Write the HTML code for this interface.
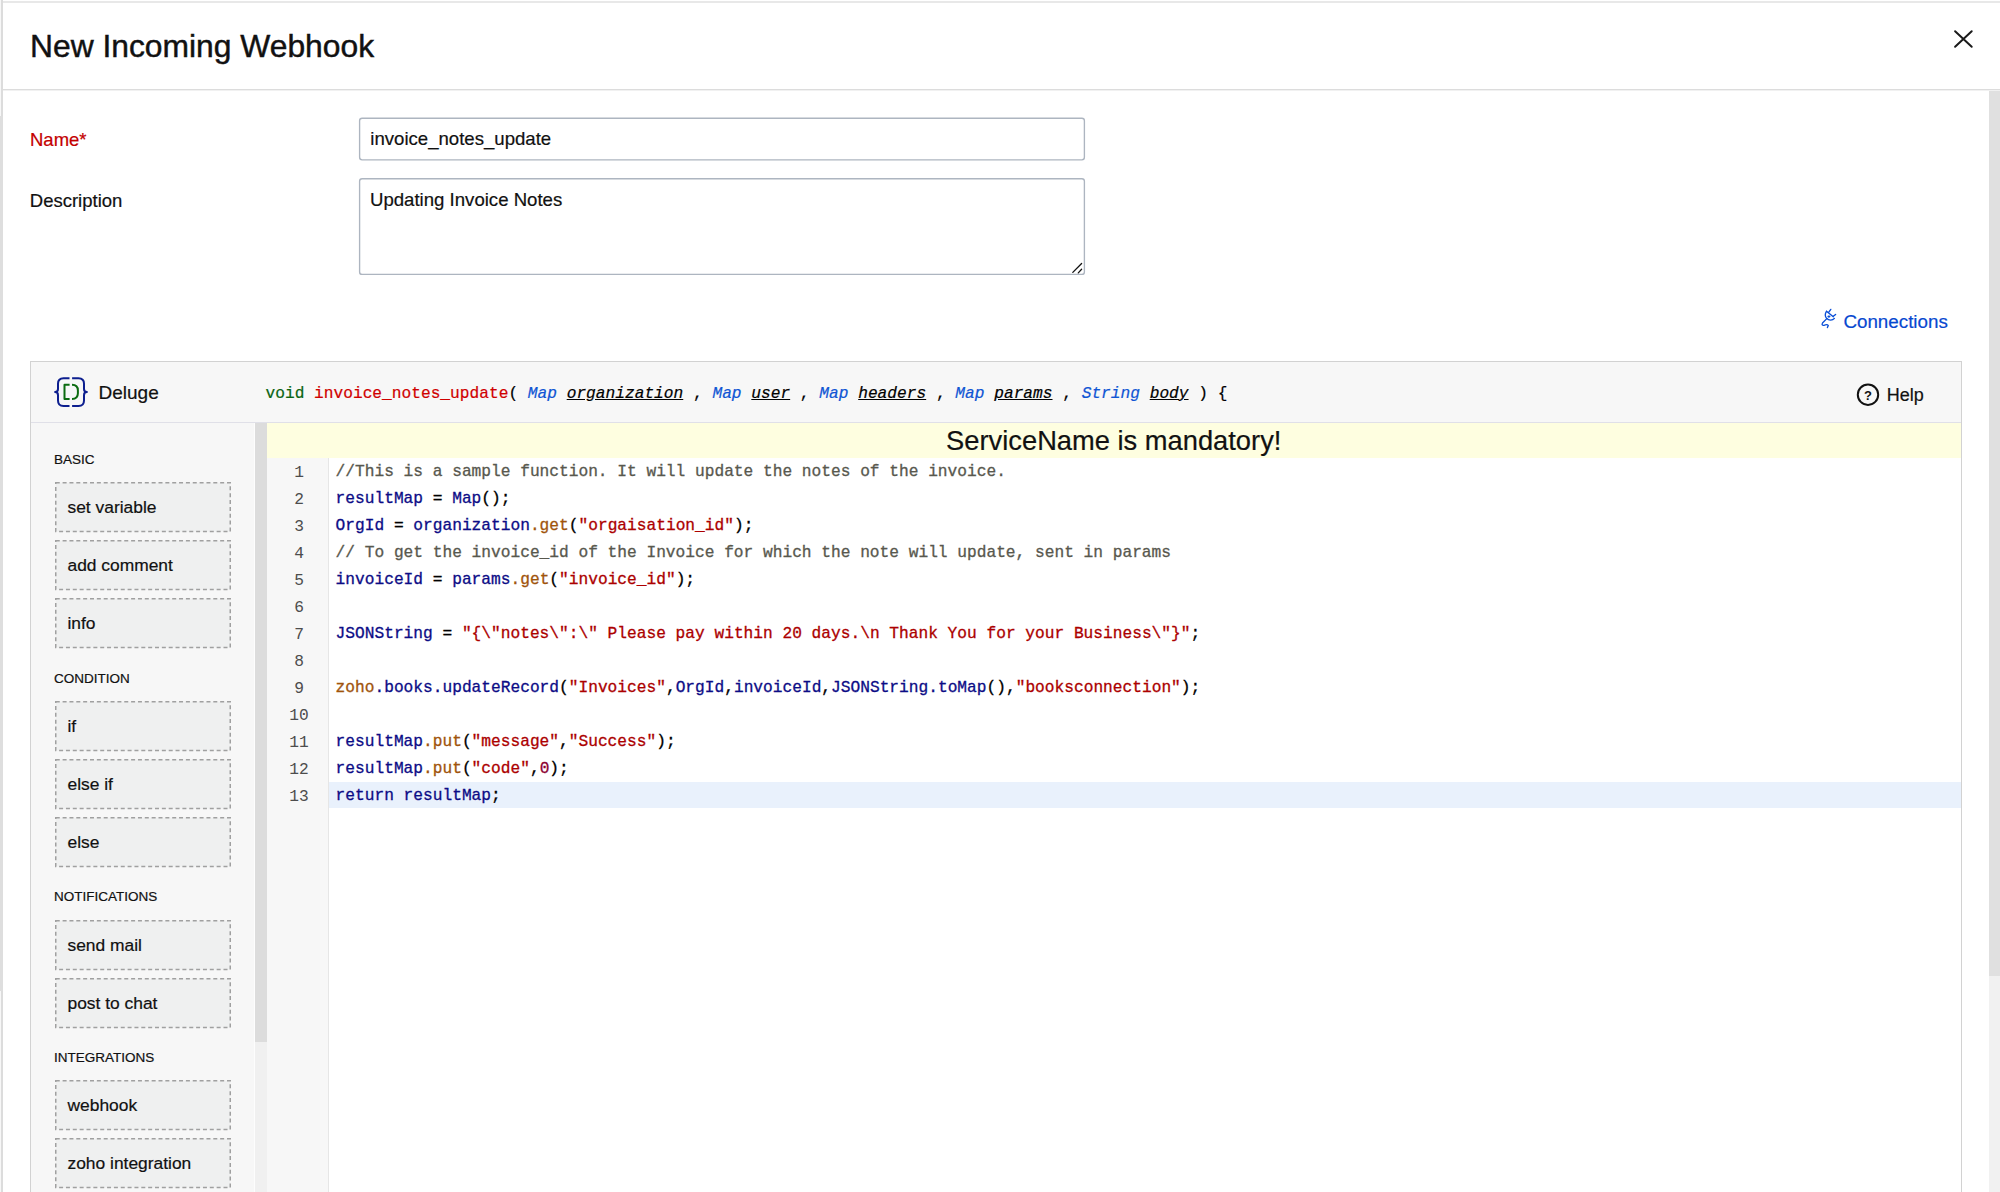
<!DOCTYPE html>
<html><head><meta charset="utf-8">
<style>
html,body{margin:0;padding:0;}
body{width:2000px;height:1192px;position:relative;overflow:hidden;background:#fff;font-family:"Liberation Sans",sans-serif;color:#111;}
.a{position:absolute;}
.t{position:absolute;white-space:pre;line-height:1;}
.m{font-family:"Liberation Mono",monospace;}
.code div,.sig{-webkit-text-stroke:0.3px currentColor;}
.box span,.sec,.t{-webkit-text-stroke:0.2px currentColor;}
.box{position:absolute;left:55px;width:176px;height:51px;}
.box svg{position:absolute;left:0;top:0;}
.box .bd{position:absolute;inset:0;border:1.5px dashed #b0b0b0;}
.box span{position:absolute;left:12.5px;top:17px;font-size:17.4px;line-height:1;white-space:pre;color:#111;}
.sec{position:absolute;left:54px;font-size:13.5px;line-height:1;color:#111;white-space:pre;}
.code div{position:absolute;left:335.6px;height:27px;line-height:27px;white-space:pre;font-family:"Liberation Mono",monospace;font-size:16.2px;color:#000;}
.ln div{position:absolute;left:280px;width:38px;text-align:center;height:27px;line-height:27px;font-family:"Liberation Mono",monospace;font-size:16.2px;color:#4d4d4d;}
.v{color:#0c0c86}.s{color:#ac0000}.f{color:#a0540c}.c{color:#58584e}.n{color:#8b0030}
.sig i{font-style:italic}
.ty{color:#0f55d4;font-style:italic}
.pn{font-style:italic;text-decoration:underline;}
</style></head><body>
<!-- frame edges -->
<div class="a" style="left:0;top:0;width:1px;height:1192px;background:#f7f7f7"></div>
<div class="a" style="left:1px;top:0;width:2px;height:1192px;background:#dcdcdc"></div>
<div class="a" style="left:0;top:116px;width:3px;height:875px;background:#dedede"></div>
<div class="a" style="left:3px;top:1px;width:1997px;height:2px;background:#e8e8e8"></div>

<!-- header -->
<div class="t" style="left:30px;top:30.5px;font-size:31.8px;color:#111;-webkit-text-stroke:0.45px #111">New Incoming Webhook</div>
<svg class="a" style="left:1950px;top:26px" width="27" height="26" viewBox="0 0 27 26"><path d="M5.1 5.2L21.7 20.8M21.7 5.2L5.1 20.8" stroke="#1a1a1a" stroke-width="2" stroke-linecap="round"/></svg>
<div class="a" style="left:3px;top:89px;width:1997px;height:1px;background:#dcdcdc"></div><div class="a" style="left:3px;top:90px;width:1997px;height:1px;background:#f1f1f1"></div>
<!-- right scrollbar -->
<div class="a" style="left:1989px;top:91px;width:11px;height:885px;background:#e0e0e0;border-left:0"></div>
<div class="a" style="left:1989px;top:976px;width:11px;height:216px;background:#f1f1f1"></div>

<!-- form -->
<div class="t" style="left:30px;top:130.8px;font-size:18.5px;color:#c40000">Name*</div>
<div class="t" style="left:29.8px;top:191.6px;font-size:18.5px;color:#111">Description</div>
<svg class="a" style="left:350px;top:110px" width="750" height="175" viewBox="350 110 750 175"><rect x="359.6" y="118.25" width="724.8" height="41.55" rx="2.5" fill="#fff" stroke="#adb5c0" stroke-width="1.35"/><rect x="359.6" y="178.7" width="724.8" height="95.7" rx="2.5" fill="#fff" stroke="#adb5c0" stroke-width="1.35"/></svg>
<div class="t" style="left:370.3px;top:130.4px;font-size:18.6px;color:#111">invoice_notes_update</div>

<div class="t" style="left:370px;top:191.4px;font-size:18.6px;color:#111">Updating Invoice Notes</div>
<svg class="a" style="left:1068px;top:259px" width="18" height="18" viewBox="1068 259 18 18"><path d="M1072.8 272.4L1081.6 263.5M1078.3 272.9L1081.6 269.3" stroke="#111" stroke-width="1.3" stroke-linecap="round"/></svg>

<!-- connections -->
<svg class="a" style="left:1816px;top:305px" width="25" height="27" viewBox="0 0 25 27" fill="none" stroke="#0a4fd8" stroke-width="1.35" stroke-linecap="round" stroke-linejoin="round">
<path d="M10.5 6.3L17.3 11.8"/>
<path d="M10.5 6.3C9 8.5 9 11.5 10.8 13.6C12.8 15.6 16.5 15.6 18.4 13.4"/>
<path d="M12.6 7.3L14.8 4.4M17.3 11.3L19.6 9.4"/>
<path d="M10.8 13.6L6.5 18C5.5 19.5 6.5 20.8 8 20.3C9.5 19.6 11.5 19.3 12.3 20.5L11.4 22.6"/>
<ellipse cx="12.9" cy="11.5" rx="0.9" ry="0.45" fill="#0a4fd8"/>
</svg>
<div class="t" style="left:1843.4px;top:313.2px;font-size:18.8px;color:#0748d0">Connections</div>

<!-- editor -->
<div class="a" style="left:30px;top:361px;width:1930px;height:900px;border:1px solid #d2d2d2;background:#fff"></div>
<div class="a" style="left:31px;top:362px;width:1930px;height:60px;background:#f7f7f7;border-bottom:1px solid #e0e0e8"></div>
<svg class="a" style="left:50px;top:372px" width="42" height="40" viewBox="0 0 42 40" fill="none" stroke-width="2" stroke-linecap="round" stroke-linejoin="round">
<path stroke="#0d1f8f" stroke-linecap="butt" d="M19.5 6.2H13.5Q8 6.2 8 11.7V17Q8 20.1 5.1 20.1Q8 20.1 8 23.2V28.4Q8 33.9 13.5 33.9H19.5"/>
<path stroke="#0d1f8f" stroke-linecap="butt" d="M22.1 6.2H28.5Q34 6.2 34 11.7V17Q34 20.1 36.9 20.1Q34 20.1 34 23.2V28.4Q34 33.9 28.5 33.9H22.1"/>
<path stroke="#0b6b10" stroke-linecap="butt" d="M19.6 12.8H14.5V27H19.6"/>
<path stroke="#0b6b10" stroke-linecap="butt" d="M22 12.8C25.8 12.8 27.9 15 27.9 18.5V21.3C27.9 24.8 25.8 27 22 27"/>
</svg>
<div class="t" style="left:98.5px;top:383.3px;font-size:19px;color:#111">Deluge</div>
<div class="t m sig" style="left:265.5px;top:386px;font-size:16.2px;color:#000"><span style="color:#0a6412">void</span> <span style="color:#d00000">invoice_notes_update</span>( <span class="ty">Map</span> <span class="pn">organization</span> , <span class="ty">Map</span> <span class="pn">user</span> , <span class="ty">Map</span> <span class="pn">headers</span> , <span class="ty">Map</span> <span class="pn">params</span> , <span class="ty">String</span> <span class="pn">body</span> ) {</div>
<svg class="a" style="left:1855px;top:382px" width="26" height="26" viewBox="0 0 26 26"><circle cx="13" cy="12.7" r="10.2" fill="none" stroke="#111" stroke-width="2"/><text x="13" y="18.2" text-anchor="middle" font-family="Liberation Sans" font-weight="bold" font-size="13" fill="#111">?</text></svg>
<div class="t" style="left:1886.8px;top:386px;font-size:18px;color:#111">Help</div>

<!-- sidebar -->
<div class="a" style="left:31px;top:423px;width:223px;height:800px;background:#f7f7f7"></div><div class="a" style="left:254px;top:423px;width:1px;height:800px;background:#fdfdfd"></div>
<div class="a" style="left:255px;top:423px;width:11.5px;height:618.5px;background:#dcdcdc"></div>
<div class="a" style="left:255px;top:1041.5px;width:11.5px;height:200px;background:#f0f0f0"></div>

<div class="sec" style="top:452.6px">BASIC</div>
<div class="box" style="top:482px"><svg width="176" height="51"><rect x="0.75" y="0.75" width="174.5" height="48.8" fill="#eff0f0" stroke="#a0a0a0" stroke-width="1.5" stroke-dasharray="4 2.85"/></svg><span>set variable</span></div>
<div class="box" style="top:540px"><svg width="176" height="51"><rect x="0.75" y="0.75" width="174.5" height="48.8" fill="#eff0f0" stroke="#a0a0a0" stroke-width="1.5" stroke-dasharray="4 2.85"/></svg><span>add comment</span></div>
<div class="box" style="top:598px"><svg width="176" height="51"><rect x="0.75" y="0.75" width="174.5" height="48.8" fill="#eff0f0" stroke="#a0a0a0" stroke-width="1.5" stroke-dasharray="4 2.85"/></svg><span>info</span></div>
<div class="sec" style="top:671.6px">CONDITION</div>
<div class="box" style="top:701px"><svg width="176" height="51"><rect x="0.75" y="0.75" width="174.5" height="48.8" fill="#eff0f0" stroke="#a0a0a0" stroke-width="1.5" stroke-dasharray="4 2.85"/></svg><span>if</span></div>
<div class="box" style="top:759px"><svg width="176" height="51"><rect x="0.75" y="0.75" width="174.5" height="48.8" fill="#eff0f0" stroke="#a0a0a0" stroke-width="1.5" stroke-dasharray="4 2.85"/></svg><span>else if</span></div>
<div class="box" style="top:817px"><svg width="176" height="51"><rect x="0.75" y="0.75" width="174.5" height="48.8" fill="#eff0f0" stroke="#a0a0a0" stroke-width="1.5" stroke-dasharray="4 2.85"/></svg><span>else</span></div>
<div class="sec" style="top:889.8px">NOTIFICATIONS</div>
<div class="box" style="top:920px"><svg width="176" height="51"><rect x="0.75" y="0.75" width="174.5" height="48.8" fill="#eff0f0" stroke="#a0a0a0" stroke-width="1.5" stroke-dasharray="4 2.85"/></svg><span>send mail</span></div>
<div class="box" style="top:978px"><svg width="176" height="51"><rect x="0.75" y="0.75" width="174.5" height="48.8" fill="#eff0f0" stroke="#a0a0a0" stroke-width="1.5" stroke-dasharray="4 2.85"/></svg><span>post to chat</span></div>
<div class="sec" style="top:1050.6px">INTEGRATIONS</div>
<div class="box" style="top:1080px"><svg width="176" height="51"><rect x="0.75" y="0.75" width="174.5" height="48.8" fill="#eff0f0" stroke="#a0a0a0" stroke-width="1.5" stroke-dasharray="4 2.85"/></svg><span>webhook</span></div>
<div class="box" style="top:1138px"><svg width="176" height="51"><rect x="0.75" y="0.75" width="174.5" height="48.8" fill="#eff0f0" stroke="#a0a0a0" stroke-width="1.5" stroke-dasharray="4 2.85"/></svg><span>zoho integration</span></div>

<!-- code area -->
<div class="a" style="left:266.5px;top:423px;width:1694.5px;height:34.5px;background:#fefee0"></div>
<div class="t" style="left:266.5px;width:1694.5px;text-align:center;top:426.6px;font-size:27.3px;color:#111">ServiceName is mandatory!</div>
<div class="a" style="left:266.5px;top:457.5px;width:61px;height:800px;background:#f7f7f7;border-right:1px solid #e6e6e6"></div>
<div class="a" style="left:328.5px;top:782px;width:1632.5px;height:26px;background:#e9f1fc"></div>

<div class="ln">
<div style="top:459.8px">1</div><div style="top:486.8px">2</div><div style="top:513.8px">3</div><div style="top:540.8px">4</div><div style="top:567.8px">5</div><div style="top:594.8px">6</div><div style="top:621.8px">7</div><div style="top:648.8px">8</div><div style="top:675.8px">9</div><div style="top:702.8px">10</div><div style="top:729.8px">11</div><div style="top:756.8px">12</div><div style="top:783.8px">13</div>
</div>
<div class="code">
<div style="top:458.8px"><span class="c">//This is a sample function. It will update the notes of the invoice.</span></div>
<div style="top:485.8px"><span class="v">resultMap</span> = <span class="v">Map</span>();</div>
<div style="top:512.8px"><span class="v">OrgId</span> = <span class="v">organization</span><span class="f">.get</span>(<span class="s">"orgaisation_id"</span>);</div>
<div style="top:539.8px"><span class="c">// To get the invoice_id of the Invoice for which the note will update, sent in params</span></div>
<div style="top:566.8px"><span class="v">invoiceId</span> = <span class="v">params</span><span class="f">.get</span>(<span class="s">"invoice_id"</span>);</div>
<div style="top:620.8px"><span class="v">JSONString</span> = <span class="s">"{\"notes\":\" Please pay within 20 days.\n Thank You for your Business\"}"</span>;</div>
<div style="top:674.8px"><span class="f">zoho</span><span class="v">.books.updateRecord</span>(<span class="s">"Invoices"</span>,<span class="v">OrgId</span>,<span class="v">invoiceId</span>,<span class="v">JSONString.toMap</span>(),<span class="s">"booksconnection"</span>);</div>
<div style="top:728.8px"><span class="v">resultMap</span><span class="f">.put</span>(<span class="s">"message"</span>,<span class="s">"Success"</span>);</div>
<div style="top:755.8px"><span class="v">resultMap</span><span class="f">.put</span>(<span class="s">"code"</span>,<span class="n">0</span>);</div>
<div style="top:782.8px"><span class="v">return</span> <span class="v">resultMap</span>;</div>
</div>
</body></html>
